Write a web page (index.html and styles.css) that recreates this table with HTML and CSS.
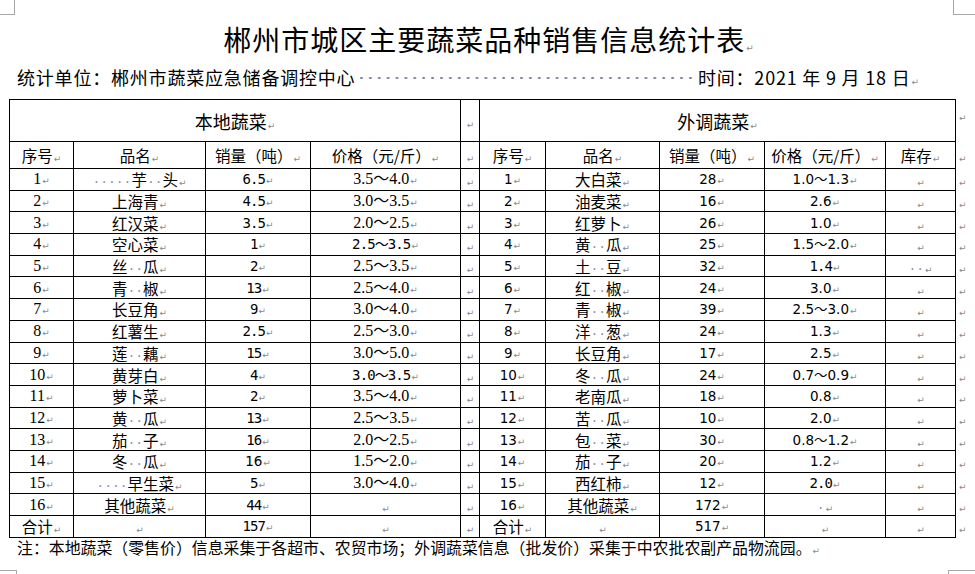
FILE: index.html
```html
<!DOCTYPE html>
<html lang="zh-CN">
<head>
<meta charset="utf-8">
<title>郴州市城区主要蔬菜品种销售信息统计表</title>
<link rel="stylesheet" href="styles.css">
</head>
<body>
<div class="page">
  <i class="crop tl"></i><i class="crop tr"></i><i class="crop bl"></i><i class="crop br"></i>
  <h1 class="title">郴州市城区主要蔬菜品种销售信息统计表<span class="pm">↵</span></h1>
  <div class="meta">
    <span>统计单位：郴州市蔬菜应急储备调控中心</span>
    <span class="leader"></span>
    <span>时间：2021 年 9 月 18 日<span class="pm">↵</span></span>
  </div>
  <table class="sheet">
    <colgroup>
      <col class="c1"><col class="c2"><col class="c3"><col class="c4"><col class="c5">
      <col class="c6"><col class="c7"><col class="c8"><col class="c9"><col class="c10"><col class="c11">
    </colgroup>
    <tr class="h1">
      <td colspan="4" class="big">本地蔬菜</td><td></td>
      <td colspan="5" class="big">外调蔬菜</td><td class="mk top"></td>
    </tr>
    <tr class="h2">
      <td>序号</td><td>品名</td><td>销量（吨）</td><td>价格（元/斤）</td><td></td>
      <td>序号</td><td>品名</td><td>销量（吨）</td><td>价格（元/斤）</td><td>库存</td><td class="mk"></td>
    </tr>
    <tr><td class="n">1</td><td><span class="sp">·····</span>芋<span class="sp">··</span>头</td><td class="m">6.5</td><td class="n">3.5～4.0</td><td></td>
      <td class="t">1</td><td>大白菜</td><td class="t">28</td><td class="t">1.0～1.3</td><td></td><td class="mk"></td></tr>
    <tr><td class="n">2</td><td>上海青</td><td class="m">4.5</td><td class="n">3.0～3.5</td><td></td>
      <td class="t">2</td><td>油麦菜</td><td class="t">16</td><td class="t">2.6</td><td></td><td class="mk"></td></tr>
    <tr><td class="n">3</td><td>红汉菜</td><td class="m">3.5</td><td class="n">2.0～2.5</td><td></td>
      <td class="t">3</td><td>红萝卜</td><td class="t">26</td><td class="t">1.0</td><td></td><td class="mk"></td></tr>
    <tr><td class="n">4</td><td>空心菜</td><td class="m">1</td><td class="m">2.5～3.5</td><td></td>
      <td class="t">4</td><td>黄<span class="sp">··</span>瓜</td><td class="t">25</td><td class="t">1.5～2.0</td><td></td><td class="mk"></td></tr>
    <tr><td class="n">5</td><td>丝<span class="sp">··</span>瓜</td><td class="m">2</td><td class="n">2.5～3.5</td><td></td>
      <td class="t">5</td><td>土<span class="sp">··</span>豆</td><td class="t">32</td><td class="m">1.4</td><td><span class="sp">··</span></td><td class="mk"></td></tr>
    <tr><td class="n">6</td><td>青<span class="sp">··</span>椒</td><td class="m">13</td><td class="n">2.5～4.0</td><td></td>
      <td class="t">6</td><td>红<span class="sp">··</span>椒</td><td class="t">24</td><td class="t">3.0</td><td></td><td class="mk"></td></tr>
    <tr><td class="n">7</td><td>长豆角</td><td class="m">9</td><td class="n">3.0～4.0</td><td></td>
      <td class="t">7</td><td>青<span class="sp">··</span>椒</td><td class="t">39</td><td class="t">2.5～3.0</td><td></td><td class="mk"></td></tr>
    <tr><td class="n">8</td><td>红薯生</td><td class="m">2.5</td><td class="n">2.5～3.0</td><td></td>
      <td class="t">8</td><td>洋<span class="sp">··</span>葱</td><td class="t">24</td><td class="t">1.3</td><td></td><td class="mk"></td></tr>
    <tr><td class="n">9</td><td>莲<span class="sp">··</span>藕</td><td class="m">15</td><td class="n">3.0～5.0</td><td></td>
      <td class="t">9</td><td>长豆角</td><td class="t">17</td><td class="t">2.5</td><td></td><td class="mk"></td></tr>
    <tr><td class="n">10</td><td>黄芽白</td><td class="m">4</td><td class="m">3.0～3.5</td><td></td>
      <td class="t">10</td><td>冬<span class="sp">··</span>瓜</td><td class="t">24</td><td class="t">0.7～0.9</td><td></td><td class="mk"></td></tr>
    <tr><td class="n">11</td><td>萝卜菜</td><td class="m">2</td><td class="n">3.5～4.0</td><td></td>
      <td class="t">11</td><td>老南瓜</td><td class="t">18</td><td class="t">0.8</td><td></td><td class="mk"></td></tr>
    <tr><td class="n">12</td><td>黄<span class="sp">··</span>瓜</td><td class="m">13</td><td class="n">2.5～3.5</td><td></td>
      <td class="t">12</td><td>苦<span class="sp">··</span>瓜</td><td class="t">10</td><td class="t">2.0</td><td></td><td class="mk"></td></tr>
    <tr><td class="n">13</td><td>茄<span class="sp">··</span>子</td><td class="m">16</td><td class="n">2.0～2.5</td><td></td>
      <td class="t">13</td><td>包<span class="sp">··</span>菜</td><td class="t">30</td><td class="t">0.8～1.2</td><td></td><td class="mk"></td></tr>
    <tr><td class="n">14</td><td>冬<span class="sp">··</span>瓜</td><td class="t">16</td><td class="n">1.5～2.0</td><td></td>
      <td class="t">14</td><td>茄<span class="sp">··</span>子</td><td class="t">20</td><td class="t">1.2</td><td></td><td class="mk"></td></tr>
    <tr><td class="n">15</td><td><span class="sp">····</span>早生菜</td><td class="m">5</td><td class="n">3.0～4.0</td><td></td>
      <td class="t">15</td><td>西红柿</td><td class="t">12</td><td class="m">2.0</td><td></td><td class="mk"></td></tr>
    <tr><td class="n">16</td><td>其他蔬菜</td><td class="m">44</td><td></td><td></td>
      <td class="t">16</td><td>其他蔬菜</td><td class="t">172</td><td><span class="sp">·</span></td><td></td><td class="mk"></td></tr>
    <tr><td>合计</td><td></td><td class="m">157</td><td></td><td></td>
      <td>合计</td><td></td><td class="t">517</td><td></td><td></td><td class="mk"></td></tr>
  </table>
  <p class="note">注：本地蔬菜（零售价）信息采集于各超市、农贸市场；外调蔬菜信息（批发价）采集于中农批农副产品物流园。<span class="pm">↵</span></p>
</div>
</body>
</html>
```

FILE: styles.css
```css
html, body {
  margin: 0;
  padding: 0;
  background: #ffffff;
}

.page {
  position: relative;
  width: 975px;
  height: 574px;
  overflow: hidden;
  padding-top: 22px;
  box-sizing: border-box;
  font-family: "Noto Sans CJK SC", "Noto Sans", sans-serif;
  color: #000;
}

.crop {
  position: absolute;
  border-color: #a8a8a8;
  border-style: solid;
  border-width: 0;
  display: block;
}
.crop.tl { left: 0; top: 0; width: 14px; height: 14px; border-right-width: 1px; border-bottom-width: 1px; }
.crop.tr { left: 953px; top: 0; width: 22px; height: 14px; border-left-width: 1px; border-bottom-width: 1px; }
.crop.bl { left: 0; top: 570px; width: 16px; height: 10px; border-right-width: 1px; border-top-width: 1px; }
.crop.br { left: 948px; top: 570px; width: 30px; height: 10px; border-left-width: 1px; border-top-width: 1px; }

.pm {
  font-family: "DejaVu Sans", sans-serif;
  font-size: 9px;
  line-height: 0;
  color: #8a8a8a;
  font-weight: normal;
  letter-spacing: 0;
  margin-left: 1px;
}

.title {
  margin: 0;
  height: 34px;
  font-size: 28px;
  font-weight: normal;
  line-height: 34px;
  letter-spacing: 1px;
  text-align: center;
  padding-left: 2px;
}

.meta {
  display: flex;
  align-items: center;
  margin-top: 9px;
  padding-left: 17px;
  padding-right: 56px;
  height: 24px;
  font-size: 18px;
  letter-spacing: 0.8px;
  line-height: 24px;
}

.leader {
  flex: 1;
  align-self: stretch;
  margin: 0 2px;
  background-image: radial-gradient(circle, #7c7c9c 1px, rgba(255,255,255,0) 1.4px);
  background-size: 8.9px 24px;
  background-position: 0 1px;
  background-repeat: repeat-x;
}

.sheet {
  margin-top: 10px;
  margin-left: 9px;
  border-collapse: collapse;
  table-layout: fixed;
  width: 966px;
  font-size: 15.5px;
}

.c1 { width: 64px; }
.c2 { width: 132px; }
.c3 { width: 105px; }
.c4 { width: 150px; }
.c5 { width: 19px; }
.c6 { width: 66px; }
.c7 { width: 114px; }
.c8 { width: 105px; }
.c9 { width: 121px; }
.c10 { width: 70px; }
.c11 { width: 20px; }

.sheet tr { height: 21.7px; }

.sheet td {
  border: 1px solid #000;
  padding: 0;
  text-align: center;
  vertical-align: middle;
  line-height: 16px;
  height: 20px;
  white-space: nowrap;
  overflow: hidden;
}

.sheet td::after {
  content: "↵";
  font-family: "DejaVu Sans", sans-serif;
  font-size: 9px;
  line-height: 0;
  letter-spacing: 0;
  color: #8a8a8a;
  margin-left: 1px;
}

.sheet tr.h1 { height: 42px; }
.sheet tr.h2 { height: 27px; }

.sheet td.big {
  font-size: 18px;
}

.sheet td.mk {
  border: none;
  text-align: left;
  padding-left: 2px;
}
.sheet td.top { vertical-align: top; padding-top: 6px; }

.n {
  font-family: "Liberation Serif", "Noto Sans CJK SC", serif;
  font-size: 16px;
}
.m {
  font-family: "DejaVu Sans Mono", "Noto Sans CJK SC", monospace;
  font-size: 14px;
  letter-spacing: -0.9px;
}
.t {
  font-family: "DejaVu Sans", "Noto Sans CJK SC", sans-serif;
  font-size: 13.5px;
}

.sp {
  font-family: "Liberation Mono", monospace;
  font-size: 13px;
  line-height: 0;
  letter-spacing: 0;
  color: #8d8da8;
}

.note {
  margin: 0;
  padding-left: 17px;
  font-size: 15.9px;
  line-height: 20px;
}
```
